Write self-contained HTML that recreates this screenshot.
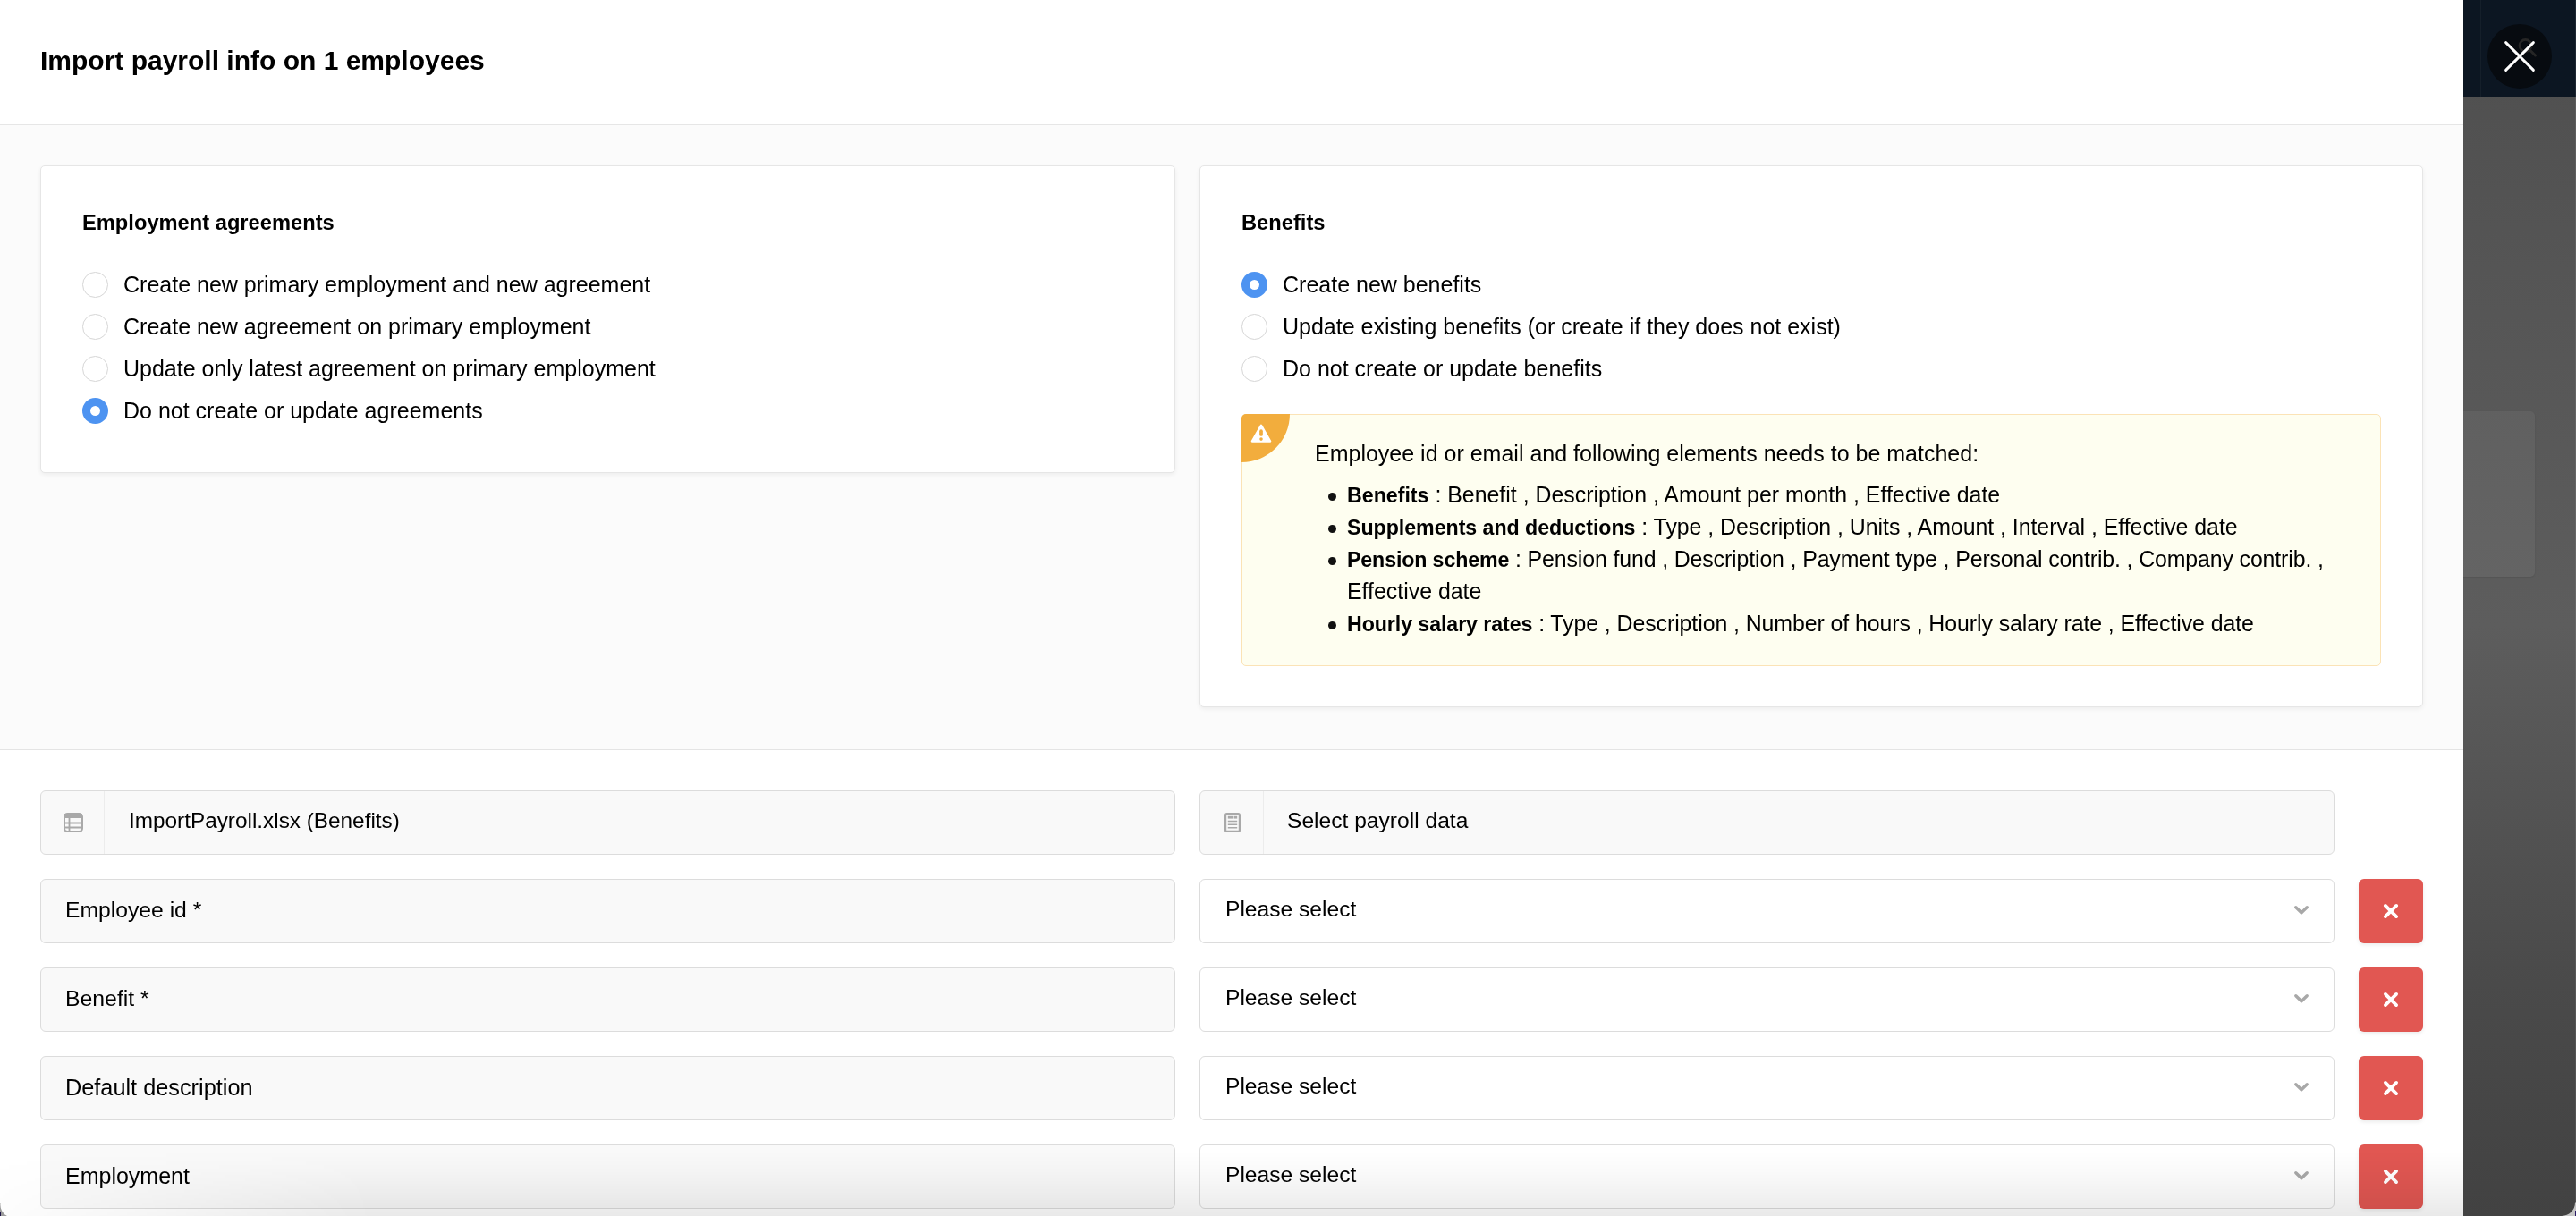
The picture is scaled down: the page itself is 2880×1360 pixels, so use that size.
<!DOCTYPE html>
<html><head><meta charset="utf-8">
<style>
html,body{margin:0;padding:0;}
body{width:2880px;height:1360px;position:relative;overflow:hidden;background:#fff;font-family:"Liberation Sans",sans-serif;color:#000;}
.a{position:absolute;}
.t{position:absolute;white-space:nowrap;font-size:25px;line-height:30px;will-change:transform;}
.f{font-size:24.6px;}
.hd{position:absolute;white-space:nowrap;font-size:23.7px;line-height:28px;font-weight:bold;will-change:transform;}
#modal{position:absolute;left:0;top:0;width:2754px;height:1360px;background:#fff;overflow:hidden;}
#header{position:absolute;left:0;top:0;width:2754px;height:139px;background:#fff;border-bottom:1px solid #e6e6e6;}
#sect{position:absolute;left:0;top:140px;width:2754px;height:698px;background:#fbfbfb;border-bottom:1px solid #e4e4e4;}
.card{position:absolute;background:#fff;border:1px solid #e6e6e6;border-radius:5px;box-sizing:border-box;box-shadow:0 2px 5px rgba(0,0,0,0.06);}
.radio{position:absolute;width:29px;height:29px;box-sizing:border-box;border-radius:50%;border:1.5px solid #d6d6d6;background:#fff;}
.radio.on{border:none;background:#4d93f1;}
.radio.on:after{content:"";position:absolute;left:9px;top:9px;width:11px;height:11px;border-radius:50%;background:#fff;}
.box{position:absolute;box-sizing:border-box;height:72px;border:1px solid #dcdcdc;border-radius:6px;background:#f9f9f9;}
.sel{background:#fff;}
.del{position:absolute;width:72px;height:72px;border-radius:6px;background:#e15752;box-shadow:0 2px 4px rgba(0,0,0,0.08);}
</style></head>
<body>
<div id="modal">
  <div id="header">
    <div class="a" style="left:45px;top:50px;font-size:30px;will-change:transform;line-height:36px;font-weight:bold;white-space:nowrap;">Import payroll info on 1 employees</div>
  </div>
  <div id="sect">
    <!-- left card -->
    <div class="card" style="left:45px;top:45px;width:1269px;height:344px;"></div>
    <!-- right card -->
    <div class="card" style="left:1341px;top:45px;width:1368px;height:606px;"></div>
  </div>

  <!-- left card content (absolute to modal) -->
  <div class="hd" style="left:91.5px;top:235px;">Employment agreements</div>
  <div class="radio" style="left:92px;top:304px;"></div>
  <div class="t" style="left:138px;top:303px;">Create new primary employment and new agreement</div>
  <div class="radio" style="left:92px;top:351px;"></div>
  <div class="t" style="left:138px;top:350px;">Create new agreement on primary employment</div>
  <div class="radio" style="left:92px;top:398px;"></div>
  <div class="t" style="left:138px;top:397px;">Update only latest agreement on primary employment</div>
  <div class="radio on" style="left:92px;top:445px;"></div>
  <div class="t" style="left:138px;top:444px;">Do not create or update agreements</div>

  <!-- right card content -->
  <div class="hd" style="left:1387.5px;top:235px;">Benefits</div>
  <div class="radio on" style="left:1388px;top:304px;"></div>
  <div class="t" style="left:1434px;top:303px;">Create new benefits</div>
  <div class="radio" style="left:1388px;top:351px;"></div>
  <div class="t" style="left:1434px;top:350px;">Update existing benefits (or create if they does not exist)</div>
  <div class="radio" style="left:1388px;top:398px;"></div>
  <div class="t" style="left:1434px;top:397px;">Do not create or update benefits</div>

  <!-- warning -->
  <div class="a" style="left:1388px;top:463px;width:1274px;height:282px;box-sizing:border-box;background:#fefef0;border:1px solid #fbe3b6;border-radius:5px;"></div>
  <div class="a" style="left:1388px;top:463px;width:54px;height:54px;background:#f2ad3d;border-top-left-radius:5px;border-bottom-right-radius:54px;"></div>
  <svg class="a" style="left:1398px;top:473px;" width="24" height="24" viewBox="0 0 24 24">
    <path d="M12 2.6 L22.2 20.6 L1.8 20.6 Z" fill="#fff" stroke="#fff" stroke-width="2.2" stroke-linejoin="round"/>
    <rect x="10.15" y="7.3" width="3.7" height="7.5" rx="1.85" fill="#f2ad3d"/>
    <circle cx="12" cy="18.1" r="1.8" fill="#f2ad3d"/>
  </svg>
  <div class="t" style="left:1470px;top:492px;">Employee id or email and following elements needs to be matched:</div>
  <div class="a" style="left:1485px;top:551px;width:9px;height:9px;border-radius:50%;background:#111;"></div>
  <div class="t" style="left:1506px;top:538px;font-size:24.9px;"><b style="font-size:23.2px">Benefits</b> : Benefit , Description , Amount per month , Effective date</div>
  <div class="a" style="left:1485px;top:587px;width:9px;height:9px;border-radius:50%;background:#111;"></div>
  <div class="t" style="left:1506px;top:574px;font-size:24.9px;letter-spacing:-0.037px;"><b style="font-size:23.2px">Supplements and deductions</b> : Type , Description , Units , Amount , Interval , Effective date</div>
  <div class="a" style="left:1485px;top:623px;width:9px;height:9px;border-radius:50%;background:#111;"></div>
  <div class="t" style="left:1506px;top:610px;font-size:24.9px;letter-spacing:-0.128px;"><b style="font-size:23.2px">Pension scheme</b> : Pension fund , Description , Payment type , Personal contrib. , Company contrib. ,</div>
  <div class="t" style="left:1506px;top:646px;font-size:24.9px;">Effective date</div>
  <div class="a" style="left:1485px;top:695px;width:9px;height:9px;border-radius:50%;background:#111;"></div>
  <div class="t" style="left:1506px;top:682px;font-size:24.9px;letter-spacing:-0.079px;"><b style="font-size:23.2px">Hourly salary rates</b> : Type , Description , Number of hours , Hourly salary rate , Effective date</div>

  <!-- form rows -->
  <div class="box" style="left:45px;top:884px;width:1269px;">
    <div class="a" style="left:70px;top:0;width:1px;height:70px;background:#ececec;"></div>
    <svg class="a" style="left:25px;top:24px;" width="22" height="22" viewBox="0 0 22 22">
      <rect x="1" y="1" width="20" height="20" rx="3.5" fill="none" stroke="#a9a9a9" stroke-width="2"/>
      <rect x="1" y="1" width="20" height="5" fill="#a9a9a9"/>
      <path d="M1 11.5H21M1 16.5H21M6.5 6V21" stroke="#a9a9a9" stroke-width="1.8"/>
    </svg>
  </div>
  <div class="t f" style="left:143.5px;top:903px;font-size:24.33px">ImportPayroll.xlsx (Benefits)</div>
  <div class="box" style="left:1341px;top:884px;width:1269px;">
    <div class="a" style="left:70px;top:0;width:1px;height:70px;background:#ececec;"></div>
    <svg class="a" style="left:27px;top:24px;" width="18" height="22" viewBox="0 0 18 22">
      <rect x="1.1" y="1.1" width="15.8" height="19.8" rx="1.5" fill="none" stroke="#a9a9a9" stroke-width="2.2"/>
      <rect x="3.8" y="3.8" width="5.6" height="2.8" fill="#a9a9a9"/>
      <rect x="10.6" y="3.8" width="3.6" height="2.8" fill="#a9a9a9"/>
      <path d="M3.8 9.6H14.2M3.8 13.2H14.2M3.8 16.8H14.2" stroke="#a9a9a9" stroke-width="1.5"/>
    </svg>
  </div>
  <div class="t f" style="left:1439px;top:903px;">Select payroll data</div>

  <!-- row 1 -->
  <div class="box" style="left:45px;top:983px;width:1269px;"></div>
  <div class="t f" style="left:73px;top:1002.5px;font-size:24.7px">Employee id *</div>
  <div class="box sel" style="left:1341px;top:983px;width:1269px;"></div>
  <div class="t f" style="left:1369.5px;top:1002px;">Please select</div>
  <svg class="a" style="left:2563px;top:1011px;" width="20" height="14" viewBox="0 0 20 14"><path d="M3.8 3.8L10 9.8L16.2 3.8" fill="none" stroke="#a8a8a8" stroke-width="3.4" stroke-linecap="round" stroke-linejoin="round"/></svg>
  <div class="del" style="left:2637px;top:983px;"><svg class="a" style="left:26px;top:26px;" width="20" height="20" viewBox="0 0 20 20"><path d="M3.9 3.9L16.1 16.1M16.1 3.9L3.9 16.1" stroke="#fff" stroke-width="3.8" stroke-linecap="round"/></svg></div>

  <!-- row 2 -->
  <div class="box" style="left:45px;top:1082px;width:1269px;"></div>
  <div class="t f" style="left:73px;top:1101.5px;font-size:24.8px">Benefit *</div>
  <div class="box sel" style="left:1341px;top:1082px;width:1269px;"></div>
  <div class="t f" style="left:1369.5px;top:1101px;">Please select</div>
  <svg class="a" style="left:2563px;top:1110px;" width="20" height="14" viewBox="0 0 20 14"><path d="M3.8 3.8L10 9.8L16.2 3.8" fill="none" stroke="#a8a8a8" stroke-width="3.4" stroke-linecap="round" stroke-linejoin="round"/></svg>
  <div class="del" style="left:2637px;top:1082px;"><svg class="a" style="left:26px;top:26px;" width="20" height="20" viewBox="0 0 20 20"><path d="M3.9 3.9L16.1 16.1M16.1 3.9L3.9 16.1" stroke="#fff" stroke-width="3.8" stroke-linecap="round"/></svg></div>

  <!-- row 3 -->
  <div class="box" style="left:45px;top:1181px;width:1269px;"></div>
  <div class="t f" style="left:73px;top:1200.5px;font-size:25.3px">Default description</div>
  <div class="box sel" style="left:1341px;top:1181px;width:1269px;"></div>
  <div class="t f" style="left:1369.5px;top:1200px;">Please select</div>
  <svg class="a" style="left:2563px;top:1209px;" width="20" height="14" viewBox="0 0 20 14"><path d="M3.8 3.8L10 9.8L16.2 3.8" fill="none" stroke="#a8a8a8" stroke-width="3.4" stroke-linecap="round" stroke-linejoin="round"/></svg>
  <div class="del" style="left:2637px;top:1181px;"><svg class="a" style="left:26px;top:26px;" width="20" height="20" viewBox="0 0 20 20"><path d="M3.9 3.9L16.1 16.1M16.1 3.9L3.9 16.1" stroke="#fff" stroke-width="3.8" stroke-linecap="round"/></svg></div>

  <!-- row 4 -->
  <div class="box" style="left:45px;top:1280px;width:1269px;"></div>
  <div class="t f" style="left:73px;top:1299.5px;font-size:25px">Employment</div>
  <div class="box sel" style="left:1341px;top:1280px;width:1269px;"></div>
  <div class="t f" style="left:1369.5px;top:1299px;">Please select</div>
  <svg class="a" style="left:2563px;top:1308px;" width="20" height="14" viewBox="0 0 20 14"><path d="M3.8 3.8L10 9.8L16.2 3.8" fill="none" stroke="#a8a8a8" stroke-width="3.4" stroke-linecap="round" stroke-linejoin="round"/></svg>
  <div class="del" style="left:2637px;top:1280px;"><svg class="a" style="left:26px;top:26px;" width="20" height="20" viewBox="0 0 20 20"><path d="M3.9 3.9L16.1 16.1M16.1 3.9L3.9 16.1" stroke="#fff" stroke-width="3.8" stroke-linecap="round"/></svg></div>

  <!-- bottom fade -->
  <div class="a" style="left:0;top:1288px;width:2754px;height:72px;background:linear-gradient(to bottom,rgba(0,0,0,0) 0,rgba(0,0,0,0.02) 30%,rgba(0,0,0,0.055) 70%,rgba(0,0,0,0.085) 100%);-webkit-mask-image:linear-gradient(to right,rgba(0,0,0,0.1) 0,#000 420px);mask-image:linear-gradient(to right,rgba(0,0,0,0.1) 0,#000 420px);"></div>
</div>

<!-- right overlay strip -->
<div class="a" style="left:2754px;top:0;width:126px;height:1360px;overflow:hidden;background:linear-gradient(to bottom,#4e4e4e 0,#555 300px,#5d5d5d 700px,#4a4a4a 1100px,#424242 1360px);">
  <div class="a" style="left:0;top:306px;width:126px;height:1px;background:rgba(0,0,0,0.12);"></div>
  <div class="a" style="left:-10px;top:460px;width:90px;height:185px;border-radius:5px;background:rgba(255,255,255,0.05);box-shadow:0 1px 2px rgba(0,0,0,0.1);"></div>
  <div class="a" style="left:0;top:552px;width:80px;height:1px;background:rgba(0,0,0,0.1);"></div>
</div>
<div class="a" style="left:2754px;top:0;width:126px;height:108px;background:#0c1622;">
  <div class="a" style="left:19px;top:0;width:1px;height:108px;background:rgba(255,255,255,0.04);"></div>
  <div class="a" style="left:27px;top:27px;width:72px;height:72px;border-radius:50%;background:#070b10;"></div>
  <svg class="a" style="left:56px;top:38px;" width="30" height="30" viewBox="0 0 30 30"><circle cx="13.5" cy="13" r="6.6" fill="none" stroke="#262626" stroke-width="2.6"/><path d="M18.5 18L24.5 24" stroke="#262626" stroke-width="3" stroke-linecap="round"/></svg>
  <svg class="a" style="left:44px;top:44px;" width="38" height="38" viewBox="0 0 38 38"><path d="M3.6 3.6L34.4 34.4M34.4 3.6L3.6 34.4" stroke="#fff" stroke-width="2.9" stroke-linecap="round"/></svg>
</div>
<div class="a" style="left:2879px;top:0;width:1px;height:1345px;background:rgba(255,255,255,0.08);"></div>
<svg class="a" style="left:2864px;top:1344px;" width="16" height="16" viewBox="0 0 16 16"><path d="M16 0 V16 H0 A15 15 0 0 0 15 1 Z" fill="#c6c6c6"/><rect x="15" y="10" width="1" height="6" fill="#2a1a66"/></svg>
<svg class="a" style="left:0;top:1345px;" width="10" height="15" viewBox="0 0 10 15"><path d="M0 0 V15 H8 A14 14 0 0 1 0.5 1 Z" fill="#9a9a9a"/><rect x="0" y="10" width="1" height="5" fill="#1e1548"/></svg>
</body></html>
